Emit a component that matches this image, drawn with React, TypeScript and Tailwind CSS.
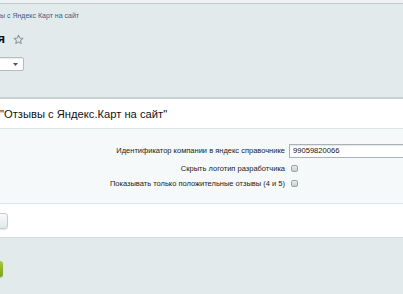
import React from 'react';

const Checkbox = () => (
    <span className="inline-block w-[7px] h-[7px] rounded-[2px] border border-[#9aa3a7] bg-gradient-to-b from-[#e9ecee] to-[#c9cfd2]" />
);

const App = () => {
    return (
        <div className="w-[403px] h-[294px] overflow-hidden bg-[#e3eaec] text-[#222] font-['Liberation_Sans',Arial,sans-serif] flex flex-col">
            <div className="h-[3px] bg-[#eef2f3] border-b border-[#c2cacd] box-content" />

            <div className="h-[93px] flex flex-col">
                <div className="mt-[7px] w-[79px] overflow-hidden flex justify-end">
                    <span className="whitespace-nowrap text-[7px] leading-[10px] text-[#3c5c86]">Отзывы с Яндекс Карт на сайт</span>
                </div>
                <div className="mt-[11px] flex items-center gap-[8px] h-[14px]">
                    <div className="w-[5px] overflow-hidden flex justify-end">
                        <span className="whitespace-nowrap text-[13px] font-bold leading-[14px] text-[#111]">модуля</span>
                    </div>
                    <svg width="11" height="11" viewBox="0 0 24 24" fill="none" stroke="#8a969c" strokeWidth="2.2" strokeLinejoin="round">
                        <path d="M12 2.5l2.9 6.1 6.6.8-4.9 4.6 1.3 6.6L12 17.3l-5.9 3.3 1.3-6.6-4.9-4.6 6.6-.8L12 2.5z" />
                    </svg>
                </div>
                <div className="mt-[11px] w-[40px] -ml-[16px] h-[14px] bg-white border border-[#b4bdc1] rounded-[2px] flex items-center justify-end pr-[5px] shadow-[inset_0_1px_1px_rgba(0,0,0,0.08)]">
                    <svg width="5" height="3" viewBox="0 0 5 3"><path d="M0 0h5L2.5 3z" fill="#555" /></svg>
                </div>
            </div>

            <div className="h-[2px] bg-[#c9d1d4] border-b border-white box-content" />

            <div className="bg-white h-[28px] flex items-center border-b border-[#dce4e7] box-content">
                <span className="whitespace-nowrap text-[11.2px] leading-[14px] text-[#111]">"Отзывы с Яндекс.Карт на сайт"</span>
            </div>

            <div className="bg-[#f5f9f9] h-[74px] pt-[15px] flex flex-col gap-[6px] text-[7.5px] leading-[10px]">
                <div className="flex items-center h-[14px]">
                    <div className="w-[289px] pr-[4px] text-right whitespace-nowrap">Идентификатор компании в яндекс справочнике</div>
                    <div className="flex-1 h-[14px] bg-white border border-[#a9b3b7] border-r-0 flex items-center pl-[3px] text-[7.6px] text-[#111] shadow-[inset_0_1px_1px_rgba(0,0,0,0.1)]">99059820066</div>
                </div>
                <div className="flex items-center h-[9px]">
                    <div className="w-[289px] pr-[4px] text-right whitespace-nowrap">Скрыть логотип разработчика</div>
                    <div className="pl-[2px] flex items-center"><Checkbox /></div>
                </div>
                <div className="flex items-center h-[9px]">
                    <div className="w-[289px] pr-[4px] text-right whitespace-nowrap">Показывать только положительные отзывы (4 и 5)</div>
                    <div className="pl-[2px] flex items-center"><Checkbox /></div>
                </div>
            </div>

            <div className="bg-white h-[33px] border-t border-[#dbe4e7] border-b border-b-[#d3dbde] box-content flex items-center">
                <div className="-ml-[20px] w-[28px] h-[16px] rounded-[3px] border border-[#c3cbce] bg-gradient-to-b from-[#f8fafa] to-[#e2e8ea] shadow-[0_1px_1px_rgba(0,0,0,0.1)]" />
            </div>

            <div className="pt-[23px]">
                <div className="-ml-[20px] w-[23px] h-[16px] rounded-[3px] bg-gradient-to-b from-[#a6c93a] to-[#7aa313] shadow-[0_1px_1px_rgba(0,0,0,0.2)]" />
            </div>
        </div>
    );
};

export default App;
